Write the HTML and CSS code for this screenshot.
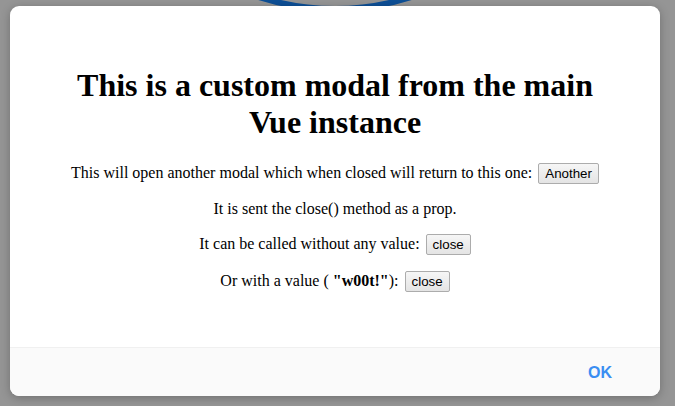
FILE: index.html
```html
<!DOCTYPE html>
<html>
<head>
<meta charset="utf-8">
<link rel="stylesheet" href="styles.css">
</head>
<body>
<svg class="ring" width="675" height="30" viewBox="0 0 675 30">
  <circle cx="335" cy="-239" r="248" fill="none" stroke="#0d4f96" stroke-width="6"/>
</svg>
<div class="overlay">
  <div class="modal">
    <div class="modal-body">
      <h1 class="title">This is a custom modal from the main Vue instance</h1>
      <p class="line">This will open another modal which when closed will return to this one: <button class="btn">Another</button></p>
      <p class="line">It is sent the close() method as a prop.</p>
      <p class="line">It can be called without any value: <button class="btn">close</button></p>
      <p class="line">Or with a value ( <strong>"w00t!"</strong>): <button class="btn">close</button></p>
    </div>
    <div class="modal-footer">
      <button class="ok">OK</button>
    </div>
  </div>
</div>
</body>
</html>
```
FILE: styles.css
```css
html, body {
  margin: 0;
  padding: 0;
  width: 675px;
  height: 406px;
  overflow: hidden;
  background: #959595;
  font-family: "Liberation Serif", "Times New Roman", serif;
}
.ring {
  position: absolute;
  left: 0;
  top: 0;
  z-index: 0;
}
.overlay {
  position: relative;
  z-index: 1;
  padding: 6px 15px 0 10px;
}
.modal {
  width: 650px;
  height: 390px;
  background: #fff;
  border-radius: 9px;
  box-shadow: 0 2px 10px rgba(0, 0, 0, 0.25);
  display: flex;
  flex-direction: column;
  overflow: hidden;
}
.modal-body {
  flex: 1;
  padding: 40px 40px 0;
  text-align: center;
  color: #000;
}
.title {
  font-size: 32px;
  font-weight: bold;
  margin: 21px 0 22px;
  line-height: 37px;
}
.line {
  font-size: 16px;
  margin: 16px 0;
}
.btn {
  font-family: "Liberation Sans", Arial, sans-serif;
  font-size: 13.33px;
  color: #000;
  background: linear-gradient(#f6f6f6, #e4e4e4);
  border: 1px solid #acacac;
  border-radius: 2px;
  padding: 1px 6px;
  margin: 0 0 0 2px;
  height: 21px;
}
.modal-footer {
  height: 48px;
  border-top: 1px solid #f0f0f0;
  background: #fafafa;
  display: flex;
  justify-content: flex-end;
  align-items: center;
  padding: 0 48px 0 0;
}
.ok {
  font-family: "Liberation Sans", Arial, sans-serif;
  font-weight: bold;
  font-size: 16px;
  color: #3a8ef2;
  background: none;
  border: none;
  padding: 0;
  margin-top: 2px;
}
```
